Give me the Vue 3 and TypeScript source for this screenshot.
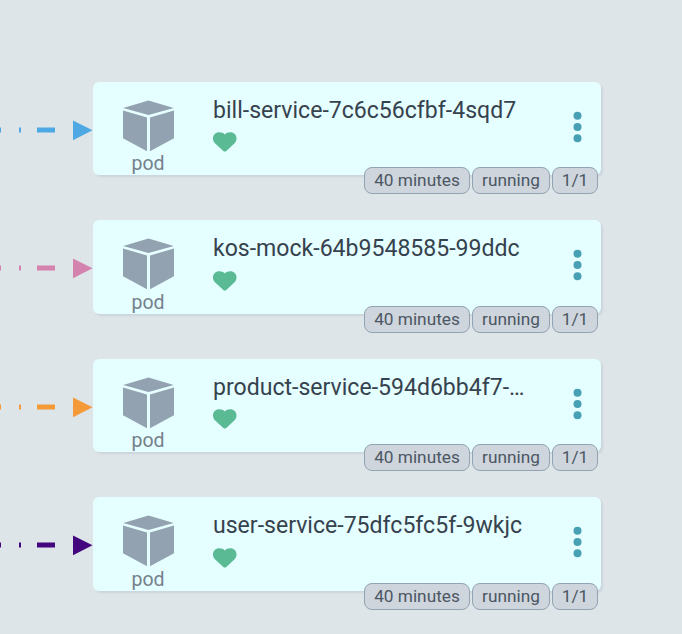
<script setup lang="ts">
interface Pod {
  name: string
  edge: string
  age: string
  status: string
  ready: string
}

const pods: Pod[] = [
  { name: 'bill-service-7c6c56cfbf-4sqd7', edge: '#4ea8e4', age: '40 minutes', status: 'running', ready: '1/1' },
  { name: 'kos-mock-64b9548585-99ddc', edge: '#d482ae', age: '40 minutes', status: 'running', ready: '1/1' },
  { name: 'product-service-594d6bb4f7-…', edge: '#f59a38', age: '40 minutes', status: 'running', ready: '1/1' },
  { name: 'user-service-75dfc5fc5f-9wkjc', edge: '#43067f', age: '40 minutes', status: 'running', ready: '1/1' },
]
</script>

<template>
  <main class="tree">
    <div v-for="pod in pods" :key="pod.name" class="row">
      <svg class="edge" width="93" height="94" viewBox="0 0 93 94" :fill="pod.edge">
        <path d="M0 45.5h1v5H0zM19 45.5h2v5h-2zM37 45.5h18v5H37zM73 38.5l19.5 9.8L73 58.2z" />
      </svg>
      <article class="card">
        <div class="kind">
          <svg class="cube" width="52" height="52" viewBox="0 0 52 52" fill="#93a2b0">
            <path d="M.7 7.7 26 .2l25.2 7.5L26 14.9zM.5 10.4 24.5 17.4V51.1L.5 38zM51.5 10.4 27.5 17.4V51.1l24-13.1z" />
          </svg>
          <span class="kind-name">pod</span>
        </div>
        <div class="info">
          <div class="name">{{ pod.name }}</div>
          <svg class="heart" width="24" height="20" viewBox="0 0 24 20" fill="#5aba94">
            <path d="M11.8 19.6c-.6 0-1-.3-1.5-.7L2.2 11.5C.8 10.1 0 8.5 0 6.5 0 2.8 2.8.3 6.2.3c2.300 0 4.400.8 5.600 2.200C13 1.100 15 .3 17.300.3c3.400 0 6.200 2.500 6.200 6.200 0 2-.8 3.600-2.200 5l-8 7.400c-.5.4-.9.7-1.500.7z" />
          </svg>
        </div>
        <svg class="menu" width="10" height="32" viewBox="0 0 10 32" fill="#48a0b4">
          <circle cx="5.5" cy="4.7" r="4" />
          <circle cx="5.5" cy="16" r="4" />
          <circle cx="5.5" cy="27.3" r="4" />
        </svg>
        <div class="badges">
          <span class="badge age">{{ pod.age }}</span>
          <span class="badge status">{{ pod.status }}</span>
          <span class="badge ready">{{ pod.ready }}</span>
        </div>
      </article>
    </div>
  </main>
</template>

<style>
body {
  margin: 0;
  background: #dee5e8;
}
</style>

<style scoped>
.tree {
  box-sizing: border-box;
  width: 682px;
  height: 634px;
  padding-top: 81.8px;
  overflow: hidden;
  display: flex;
  flex-direction: column;
  gap: 45px;
  background: #dee5e8;
  font-family: Roboto, sans-serif;
}
.row {
  display: flex;
  flex: none;
  height: 93.5px;
}
.edge {
  flex: none;
}
.card {
  box-sizing: border-box;
  position: relative;
  display: flex;
  width: 508px;
  height: 93.5px;
  padding-left: 29.5px;
  border-radius: 6px;
  background: #e5feff;
  box-shadow: 2px 2px 2px #cdd5dd;
}
.kind {
  display: flex;
  flex-direction: column;
  align-items: center;
  width: 51px;
  padding-top: 18.2px;
}
.cube {
  display: block;
  flex: none;
  overflow: visible;
}
.cube path {
  transform: translate(0.5px, 0.2px);
}
.kind-name {
  margin-top: 1.5px;
  color: #75818b;
  font-size: 19.5px;
  line-height: 22px;
}
.info {
  width: 350px;
  margin-left: 39.5px;
  padding-top: 15px;
}
.name {
  color: #36424e;
  font-size: 23.07px;
  line-height: 28px;
  white-space: nowrap;
}
.heart {
  display: block;
  margin-top: 7.6px;
}
.menu {
  margin: 28.8px 0 0 9px;
}
.badges {
  position: absolute;
  right: 3px;
  bottom: -18.9px;
  display: flex;
  gap: 2px;
}
.badge {
  box-sizing: border-box;
  height: 27px;
  border: 1px solid #93a3b2;
  border-radius: 8px;
  background: #ced5dd;
  color: #4c5763;
  font-size: 17.25px;
  line-height: 25px;
  text-align: center;
  white-space: nowrap;
}
.age {
  width: 106px;
}
.status {
  width: 78px;
}
.ready {
  width: 46px;
}
</style>
